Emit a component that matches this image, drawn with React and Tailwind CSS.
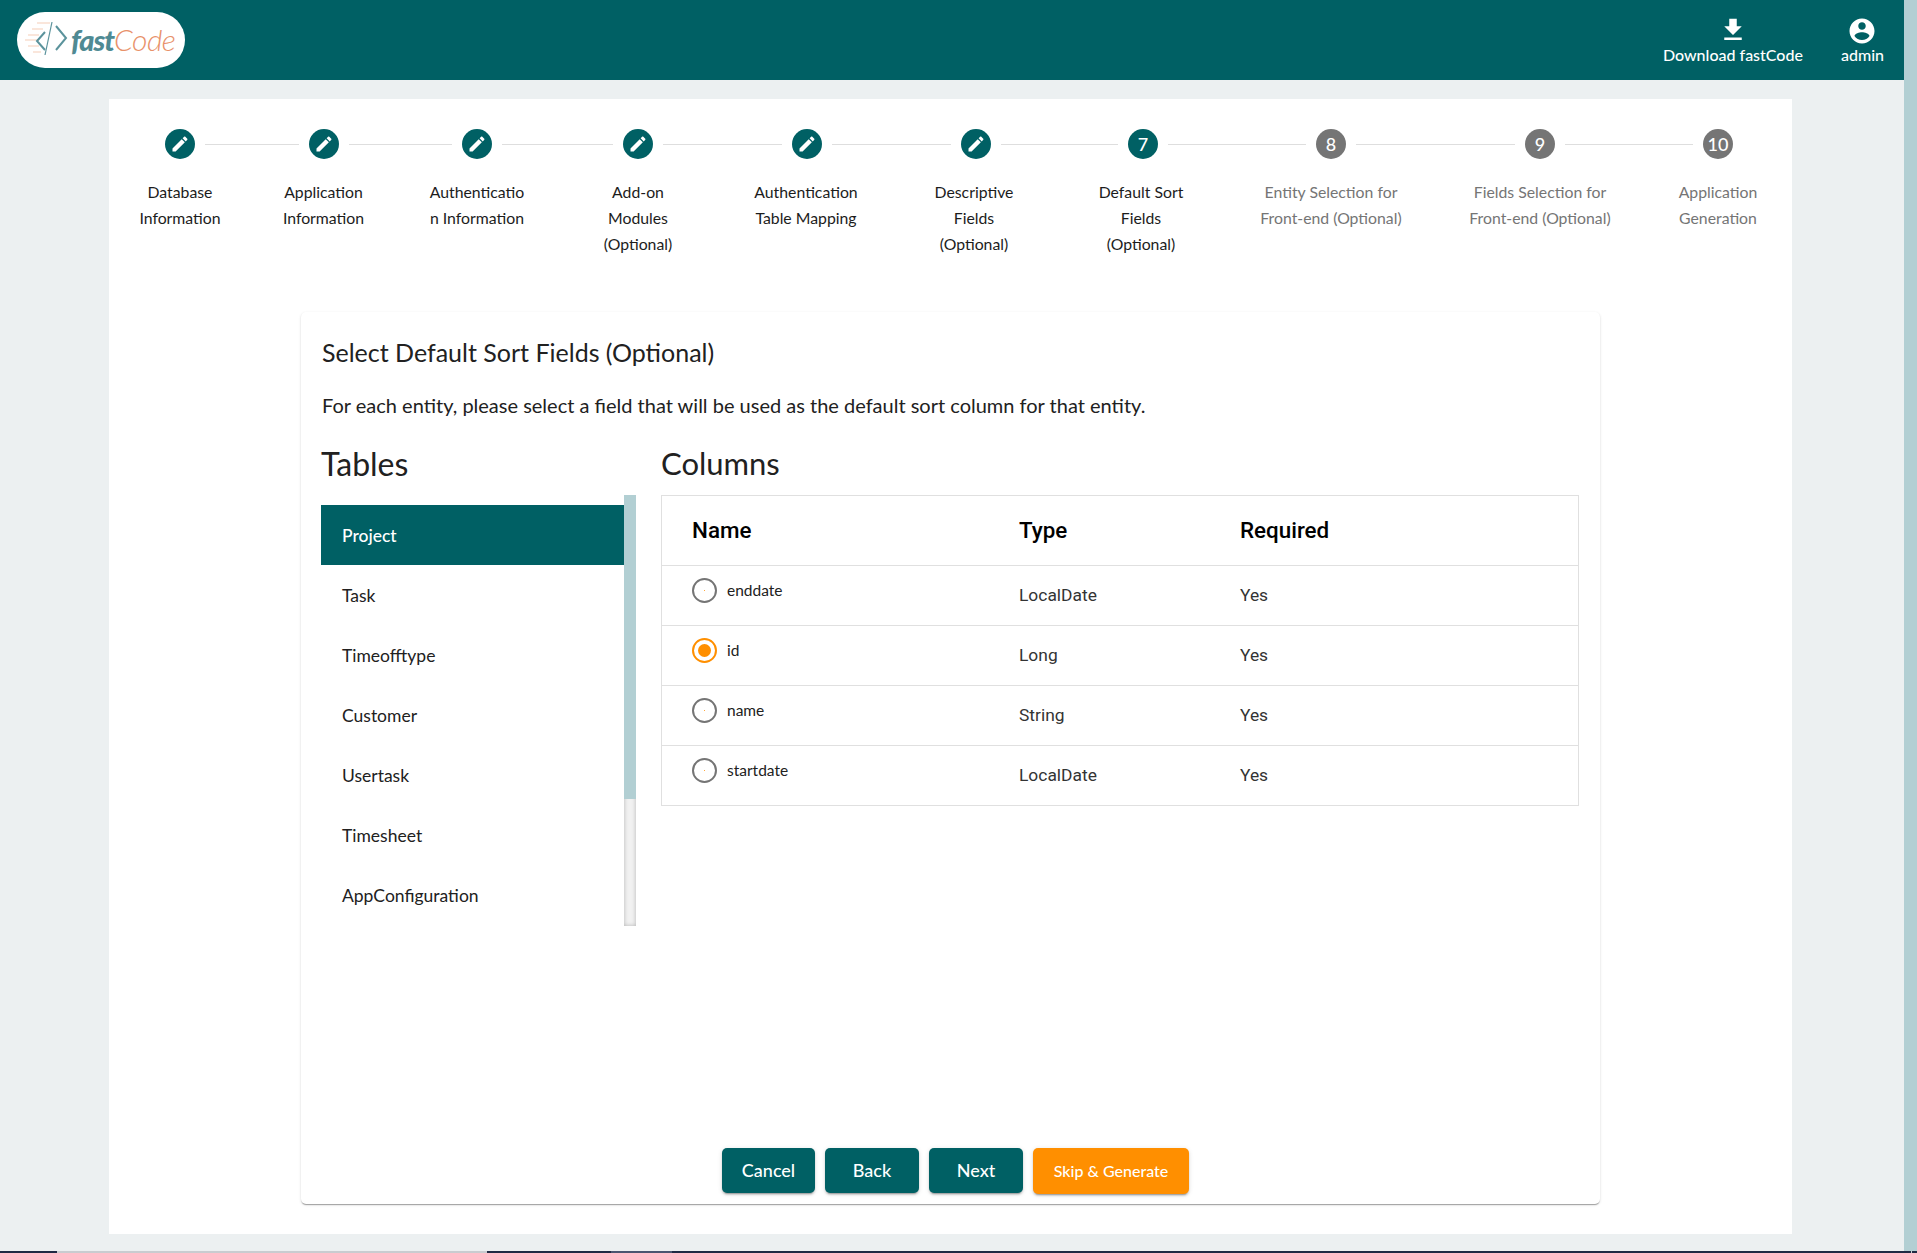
import React from "react";

const FONT = "font-['Lato','Liberation_Sans',sans-serif]";

const EDIT_PATH =
  "M3 17.25V21h3.75L17.81 9.94l-3.75-3.75L3 17.25zM20.71 7.04c.39-.39.39-1.02 0-1.41l-2.34-2.34c-.39-.39-1.02-.39-1.41 0l-1.83 1.83 3.75 3.75 1.83-1.83z";

const steps = [
  { n: 1, done: true, lineAfter: "w-[94px]", width: "w-[142px]", lines: ["Database", "Information"] },
  { n: 2, done: true, lineAfter: "w-[103px]", width: "w-[145px]", lines: ["Application", "Information"] },
  { n: 3, done: true, lineAfter: "w-[111px]", width: "w-[162px]", lines: ["Authenticatio", "n Information"] },
  { n: 4, done: true, lineAfter: "w-[119px]", width: "w-[160px]", lines: ["Add-on", "Modules", "(Optional)"] },
  { n: 5, done: true, lineAfter: "w-[119px]", width: "w-[176px]", lines: ["Authentication", "Table Mapping"] },
  { n: 6, done: true, lineAfter: "w-[117px]", width: "w-[160px]", lines: ["Descriptive", "Fields", "(Optional)"] },
  { n: 7, active: true, lineAfter: "w-[138px]", width: "w-[174px]", lines: ["Default Sort", "Fields", "(Optional)"] },
  { n: 8, lineAfter: "w-[159px]", width: "w-[206px]", lines: ["Entity Selection for", "Front-end (Optional)"] },
  { n: 9, lineAfter: "w-[128px]", width: "w-[212px]", lines: ["Fields Selection for", "Front-end (Optional)"] },
  { n: 10, width: "w-[144px]", lines: ["Application", "Generation"] },
];

const tables = ["Project", "Task", "Timeofftype", "Customer", "Usertask", "Timesheet", "AppConfiguration"];

const columns = [
  { name: "enddate", type: "LocalDate" },
  { name: "id", type: "Long", selected: true },
  { name: "name", type: "String" },
  { name: "startdate", type: "LocalDate" },
];

function Logo() {
  return (
    <div className="flex h-[56px] w-[168px] items-center rounded-full bg-white pl-[8px]">
      <svg width="46" height="40" viewBox="0 0 46 40" className="shrink-0">
        <g stroke="#f6cdb8" strokeWidth="1.2">
          <path d="M12 3h13M7 9h11M3 15h11M0 20h13M3 26h11M8 32h8" />
        </g>
        <g fill="none" stroke="#5b939c">
          <path d="M20 12l-8 9 8 9" strokeWidth="2" />
          <path d="M27 2l-7 33" strokeWidth="1.2" />
          <path d="M31 6l10 12-10 12" strokeWidth="2" />
        </g>
      </svg>
      <span className="-mt-[3px] font-['Lato',sans-serif] italic leading-none">
        <span className="text-[29px] font-black tracking-[-1px] text-[#4f8a93]">fast</span>
        <span className="text-[30px] font-light tracking-[-0.5px] text-[#e8916a]">Code</span>
      </span>
    </div>
  );
}

function Header() {
  return (
    <header className="flex h-[80px] shrink-0 items-center justify-between bg-[#006064] pl-[17px] pr-[20px]">
      <Logo />
      <div className="flex items-start gap-[38px] pt-[2px] text-white">
        <div className="flex flex-col items-center">
          <svg width="30" height="30" viewBox="0 0 24 24" fill="currentColor" className="-mt-[2px]">
            <path d="M19 9h-4V3H9v6H5l7 7 7-7zM5 18v2h14v-2H5z" />
          </svg>
          <span className={`${FONT} text-[16px] font-medium leading-[20px]`}>Download fastCode</span>
        </div>
        <div className="flex flex-col items-center">
          <svg width="30" height="30" viewBox="0 0 24 24" fill="currentColor" className="-mt-[1px]">
            <path d="M12 2C6.48 2 2 6.48 2 12s4.48 10 10 10 10-4.48 10-10S17.52 2 12 2zm0 3c1.66 0 3 1.34 3 3s-1.34 3-3 3-3-1.34-3-3 1.34-3 3-3zm0 14.2c-2.5 0-4.71-1.28-6-3.22.03-1.99 4-3.08 6-3.08 1.99 0 5.97 1.09 6 3.08-1.29 1.94-3.5 3.22-6 3.22z" />
          </svg>
          <span className={`${FONT} -mt-[1px] text-[16px] font-medium leading-[20px]`}>admin</span>
        </div>
      </div>
    </header>
  );
}

function StepCircle({ step }) {
  const on = step.done || step.active;
  return (
    <div
      className={`flex h-[30px] w-[30px] shrink-0 items-center justify-center rounded-full text-white ${
        on ? "bg-[#006064]" : "bg-[#757575]"
      }`}
    >
      {step.done ? (
        <svg width="20" height="20" viewBox="0 0 24 24" fill="currentColor">
          <path d={EDIT_PATH} />
        </svg>
      ) : (
        <span className={`${FONT} text-[18px] font-medium leading-none`}>{step.n}</span>
      )}
    </div>
  );
}

function Stepper() {
  return (
    <div className={FONT}>
      <div className="flex items-center gap-[10px] pl-[56px] pt-[30px]">
        {steps.map((s) => (
          <React.Fragment key={s.n}>
            <StepCircle step={s} />
            {s.lineAfter && <div className={`h-px shrink-0 bg-[#dedede] ${s.lineAfter}`} />}
          </React.Fragment>
        ))}
      </div>
      <div className="mt-[20px] flex h-[78px] text-[15.8px] leading-[26px]">
        {steps.map((s) => (
          <div
            key={s.n}
            className={`shrink-0 text-center ${s.width} ${s.done || s.active ? "text-[#1c1c1c]" : "text-[#757575]"}`}
          >
            {s.lines.map((line) => (
              <div key={line} className="whitespace-nowrap">
                {line}
              </div>
            ))}
          </div>
        ))}
      </div>
    </div>
  );
}

function TablesList() {
  return (
    <div className="w-[315px] shrink-0">
      <h2 className={`${FONT} h-[44px] text-[32px] leading-[46px] text-[#212121]`}>Tables</h2>
      <div className="mt-[10px] flex h-[431px]">
        <ul className="w-[303px] pt-[10px]">
          {tables.map((t, i) => (
            <li
              key={t}
              className={`flex h-[60px] items-center pl-[21px] pt-[2px] text-[17.5px] ${
                i === 0 ? "bg-[#006064] font-medium text-white" : "text-[#212121]"
              }`}
            >
              {t}
            </li>
          ))}
        </ul>
        <div className="flex w-[12px] flex-col bg-[#f1f1f1] shadow-[inset_0_0_4px_rgba(0,0,0,0.25)]">
          <div className="h-[304px] bg-[#b2cfd3]" />
        </div>
      </div>
    </div>
  );
}

function ColumnsTable() {
  return (
    <div className="ml-[25px] flex-1">
      <h2 className={`${FONT} h-[44px] text-[31px] leading-[44px] text-[#212121]`}>Columns</h2>
      <div className="mt-[10px] border border-[#e0e0e0] font-['Roboto',sans-serif]">
        <div className="grid h-[70px] grid-cols-[327px_221px_1fr] items-center border-b border-[#e0e0e0] pl-[30px] text-[22.4px] font-medium text-black">
          <span>Name</span>
          <span>Type</span>
          <span>Required</span>
        </div>
        {columns.map((c, i) => (
          <div
            key={c.name}
            className={`grid grid-cols-[327px_221px_1fr] items-center pl-[30px] text-[17.4px] text-[#333333] ${
              i < columns.length - 1 ? "h-[60px] border-b border-[#e0e0e0]" : "h-[59px]"
            }`}
          >
            <label className="mb-[10px] flex items-center">
              <span
                className={`flex h-[25px] w-[25px] items-center justify-center rounded-full border-2 ${
                  c.selected ? "border-[#ff8f00]" : "border-[#757575]"
                }`}
              >
                <span className={`rounded-full bg-[#ff8f00] ${c.selected ? "h-[13px] w-[13px]" : "h-px w-px"}`} />
              </span>
              <span className={`${FONT} ml-[10px] text-[15.5px] text-[#212121]`}>{c.name}</span>
            </label>
            <span>{c.type}</span>
            <span>Yes</span>
          </div>
        ))}
      </div>
    </div>
  );
}

function Buttons() {
  const base =
    "rounded-[5px] text-white font-medium shadow-[0_3px_1px_-2px_rgba(0,0,0,0.2),0_2px_2px_0_rgba(0,0,0,0.14),0_1px_5px_0_rgba(0,0,0,0.12)]";
  return (
    <div className={`${FONT} mt-auto flex items-start justify-center gap-[10px] pb-[10px] pl-[11px]`}>
      <button className={`${base} h-[45px] w-[93px] bg-[#006064] text-[18px]`}>Cancel</button>
      <button className={`${base} h-[45px] w-[94px] bg-[#006064] text-[18px]`}>Back</button>
      <button className={`${base} h-[45px] w-[94px] bg-[#006064] text-[18px]`}>Next</button>
      <button className={`${base} h-[46px] w-[156px] bg-[#ff8f00] text-[16px]`}>Skip &amp; Generate</button>
    </div>
  );
}

function Card() {
  return (
    <section className="mx-[192px] mt-[55px] flex h-[892px] flex-col rounded-[5px] bg-white pl-[20px] pr-[21px] pt-[20px] shadow-[0_2px_1px_-1px_rgba(0,0,0,0.2),0_1px_1px_0_rgba(0,0,0,0.14),0_1px_3px_0_rgba(0,0,0,0.12)]">
      <h1 className={`${FONT} h-[40px] pl-[1px] text-[25px] leading-[40px] text-[#212121]`}>
        Select Default Sort Fields (Optional)
      </h1>
      <p className={`${FONT} mt-[19px] h-[28px] pl-[1px] text-[20px] leading-[28px] text-[#212121]`}>
        For each entity, please select a field that will be used as the default sort column for that entity.
      </p>
      <div className={`${FONT} mt-[22px] flex`}>
        <TablesList />
        <ColumnsTable />
      </div>
      <Buttons />
    </section>
  );
}

function BottomStrip() {
  return (
    <div className="flex h-[2px] shrink-0 bg-[#1f2a44]">
      <div className="w-[57px]" />
      <div className="w-[430px] bg-[#c9ccd0]" />
      <div className="w-[124px]" />
      <div className="w-[61px] bg-[#4a5570]" />
      <div className="flex-1" />
      <div className="mr-[5px] w-px bg-[#c9ccd0]" />
    </div>
  );
}

export default function App() {
  return (
    <div className="flex h-[1253px] flex-col overflow-hidden bg-[#ecf0f1]">
      <div className="flex flex-1">
        <div className="flex flex-1 flex-col">
          <Header />
          <main className="ml-[109px] mr-[112px] mt-[19px] h-[1135px] bg-white">
            <Stepper />
            <Card />
          </main>
        </div>
        <div className="w-[13px] shrink-0 bg-[#b2cfd3]" />
      </div>
      <BottomStrip />
    </div>
  );
}
